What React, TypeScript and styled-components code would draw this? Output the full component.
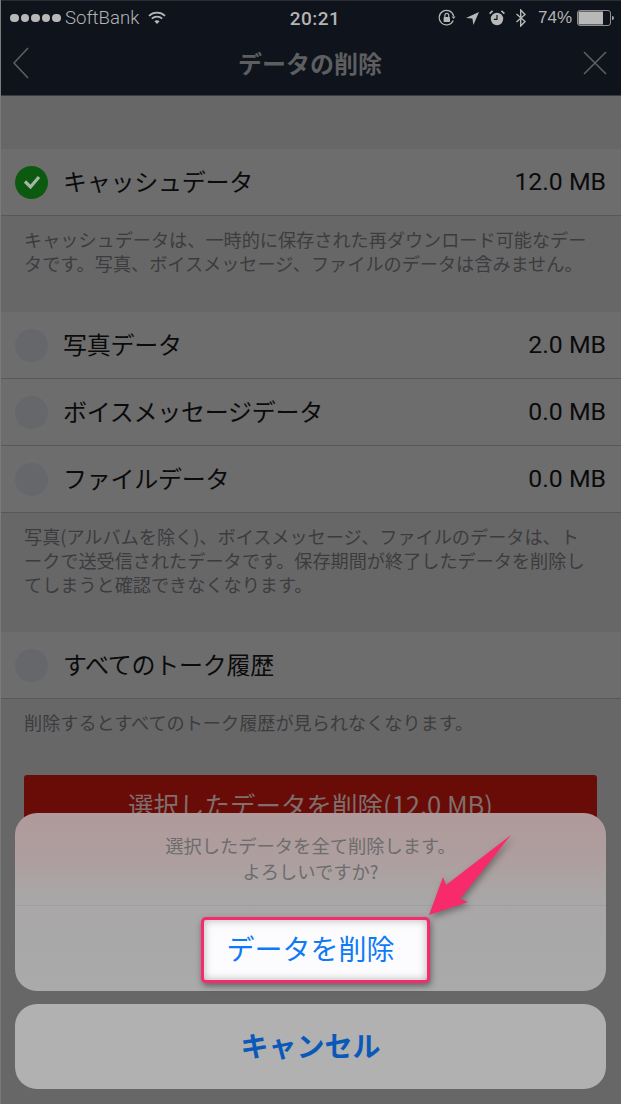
import React from "react";
import styled, { createGlobalStyle } from "styled-components";

const Global = createGlobalStyle`
  html, body { margin: 0; padding: 0; background: #676768; }
  body { font-family: "Noto Sans CJK JP", "Liberation Sans", sans-serif; }
  * { box-sizing: border-box; }
`;

const Screen = styled.div`
  position: relative;
  width: 621px;
  height: 1104px;
  overflow: hidden;
  background: #676768;
  border-left: 1px solid #7a7a7c;
`;

const Header = styled.header`
  height: 96px;
  background: #0f131b;
  border-top: 1px solid #2a2d33;
  border-bottom: 1px solid #3a3c40;
  display: flex;
  flex-direction: column;
`;

const StatusBar = styled.div`
  height: 30px;
  display: grid;
  grid-template-columns: 1fr auto 1fr;
  align-items: center;
  color: #b4b4b4;
  font-family: "Liberation Sans", sans-serif;
  font-size: 17px;
  padding: 0 7px 0 9px;
  margin-top: 2px;
`;

const StatusLeft = styled.div`
  display: flex;
  align-items: center;
  gap: 4px;
`;

const StatusRight = styled.div`
  display: flex;
  align-items: center;
  justify-content: flex-end;
  gap: 10px;
`;

const Dots = styled.div`
  display: flex;
  gap: 2px;
`;

const Dot = styled.span`
  width: 8.6px;
  height: 8.6px;
  border-radius: 50%;
  background: #b8b8b8;
`;

const Time = styled.div`
  font-size: 19px;
  font-weight: 500;
  font-family: "Roboto", sans-serif;
  letter-spacing: 0.5px;
  margin-left: 6px;
`;

const Percent = styled.span`
  font-size: 17px;
  margin-left: 1px;
  margin-right: -5px;
`;

const Carrier = styled.span`
  font-family: "Roboto", sans-serif;
  font-weight: 300;
  font-size: 18.6px;
  margin-right: 5px;
`;

const NavBar = styled.div`
  flex: 1;
  display: grid;
  grid-template-columns: 1fr auto 1fr;
  align-items: center;
  padding: 0 14px 2px 12px;
`;

const NavTitle = styled.h1`
  margin: 0;
  color: #5d5e60;
  font-size: 24px;
  font-weight: 700;
  line-height: 1;
`;

const NavIcon = styled.svg<{ $end?: boolean }>`
  display: block;
  fill: none;
  stroke: #5e5f60;
  stroke-width: 1.6;
  justify-self: ${(p) => (p.$end ? "end" : "start")};
`;

const Content = styled.main`
  padding-top: 53px;
`;

const Row = styled.div`
  height: 67px;
  padding: 0 15px 0 14px;
  display: flex;
  align-items: center;
  gap: 15px;
  background: #6d6d6e;
  border-bottom: 1px solid #58585a;
  color: #0b0b0b;
  font-size: 24px;
`;

const Radio = styled.span<{ $checked?: boolean }>`
  width: 33px;
  height: 33px;
  border-radius: 50%;
  flex: none;
  display: flex;
  align-items: center;
  justify-content: center;
  background: ${(p) => (p.$checked ? "#0c5a10" : "#65676b")};
`;

const Label = styled.span`
  flex: 1;
  line-height: 1;
  letter-spacing: -0.25px;
  padding-bottom: 2px;
`;

const Size = styled.span`
  font-family: "Roboto", "Liberation Sans", sans-serif;
  font-size: 24.8px;
  line-height: 1;
`;

const Note = styled.p<{ $h: number }>`
  margin: 0;
  height: ${(p) => p.$h}px;
  padding: 11px 14px 0 23px;
  color: #3c3c3e;
  font-size: 18.15px;
  line-height: 24px;
  white-space: pre-line;
`;

const DeleteButton = styled.div`
  margin: 0 24px 0 23px;
  height: 60px;
  padding-top: 12px;
  background: #690c08;
  border-radius: 3px;
  color: #7f6f6d;
  font-size: 25.5px;
  line-height: 34px;
  text-align: center;
`;

const Sheet = styled.div`
  position: absolute;
  left: 14px;
  top: 813px;
  width: 591px;
`;

const SheetPanel = styled.div`
  height: 178px;
  border-radius: 22px;
  overflow: hidden;
  background: linear-gradient(180deg, #b09a9b 0%, #ae9e9f 25%, #a9a7a7 50%, #aaaaaa 100%);
`;

const SheetMessage = styled.div`
  height: 93px;
  padding-top: 19px;
  border-bottom: 1px solid #9f9f9f;
  color: #6c6c6c;
  font-size: 18.3px;
  line-height: 26px;
  text-align: center;
`;

const CancelButton = styled.div`
  margin-top: 13px;
  height: 85px;
  border-radius: 22px;
  background: #b1b1b1;
  color: #0a58b8;
  font-size: 28px;
  font-weight: 700;
  line-height: 83px;
  text-align: center;
`;

const Highlight = styled.div`
  position: absolute;
  left: 200px;
  top: 917px;
  width: 229px;
  height: 66px;
  padding-right: 10px;
  background: #fcfcfe;
  border: 3px solid #f72b6b;
  border-radius: 5px;
  box-shadow: 1px 3px 6px rgba(40, 40, 40, 0.55), inset 0 0 8px rgba(120, 120, 120, 0.55);
  color: #0f7af5;
  font-size: 28px;
  line-height: 56px;
  text-align: center;
`;

const Arrow = styled.svg`
  position: absolute;
  left: 419px;
  top: 830px;
  overflow: visible;
  filter: drop-shadow(2px 3px 3px rgba(40, 40, 40, 0.45));
`;

const Check = () => (
  <svg width="20" height="16" viewBox="0 0 20 16" fill="none">
    <path d="M3 7.5 L8.5 13 L17 3" stroke="#a9b5a8" strokeWidth="3.2" />
  </svg>
);

const Wifi = () => (
  <svg width="18" height="14" viewBox="0 0 18 14" fill="none" stroke="#b8b8b8" strokeWidth="1.8">
    <path d="M1 4.8 C5.5 0.6 12.5 0.6 17 4.8" />
    <path d="M3.8 7.6 C6.8 5 11.2 5 14.2 7.6" />
    <path d="M9 13 L6.4 10.2 C8 9 10 9 11.6 10.2 Z" fill="#b8b8b8" stroke="none" />
  </svg>
);

const RotationLock = () => (
  <svg width="18" height="18" viewBox="0 0 18 18" fill="none" stroke="#b8b8b8" strokeWidth="1.2">
    <path d="M15.2 11.5 A7.3 7.3 0 1 1 15.6 7" />
    <path d="M13.6 7.6 L17.6 7.6 L15.6 10 Z" fill="#b8b8b8" stroke="none" />
    <rect x="5.6" y="8" width="6.4" height="5" rx="0.8" fill="#b8b8b8" stroke="none" />
    <path d="M6.9 8 V6.2 a1.9 1.9 0 0 1 3.8 0 V8" />
  </svg>
);

const Location = () => (
  <svg width="13" height="13" viewBox="0 0 13 13">
    <path d="M13 0 L0 6 L6.4 6.6 L7.4 13 Z" fill="#b8b8b8" />
  </svg>
);

const Alarm = () => (
  <svg width="16" height="16" viewBox="0 0 16 16">
    <circle cx="8" cy="9" r="6.2" fill="#b8b8b8" />
    <path d="M8 5 V9.4 H4.8" fill="none" stroke="#0f131b" strokeWidth="1.2" />
    <path d="M0.6 3.6 L3.6 0.8 M15.4 3.6 L12.4 0.8" stroke="#b8b8b8" strokeWidth="1.6" />
  </svg>
);

const Bluetooth = () => (
  <svg width="12" height="18" viewBox="0 0 11 18" fill="none" stroke="#b8b8b8" strokeWidth="1.4">
    <path d="M1 5 L9.5 12.6 L5.2 17 V1 L9.5 5.4 L1 13" />
  </svg>
);

const Battery = () => (
  <svg width="37" height="16" viewBox="0 0 37 16">
    <rect x="0.5" y="0.5" width="33" height="15" rx="2.5" fill="none" stroke="#8f8f8f" />
    <rect x="1.5" y="1.5" width="24.5" height="13" fill="#b8b8b8" />
    <path d="M35 6 a2 2 0 0 1 0 4 Z" fill="#a8a8a8" />
  </svg>
);

const sections = {
  cache: "キャッシュデータは、一時的に保存された再ダウンロード可能なデー\nタです。写真、ボイスメッセージ、ファイルのデータは含みません。",
  files: "写真(アルバムを除く)、ボイスメッセージ、ファイルのデータは、ト\nークで送受信されたデータです。保存期間が終了したデータを削除し\nてしまうと確認できなくなります。",
  talk: "削除するとすべてのトーク履歴が見られなくなります。",
};

export default function App() {
  return (
    <Screen>
      <Global />
      <Header>
        <StatusBar>
          <StatusLeft>
            <Dots>
              {[0, 1, 2, 3, 4].map((i) => (
                <Dot key={i} />
              ))}
            </Dots>
            <Carrier>SoftBank</Carrier>
            <Wifi />
          </StatusLeft>
          <Time>20:21</Time>
          <StatusRight>
            <RotationLock />
            <Location />
            <Alarm />
            <Bluetooth />
            <Percent>74%</Percent>
            <Battery />
          </StatusRight>
        </StatusBar>
        <NavBar>
          <NavIcon width="16" height="32" viewBox="0 0 16 32">
            <path d="M15 1 L1 16 L15 31" />
          </NavIcon>
          <NavTitle>データの削除</NavTitle>
          <NavIcon $end width="24" height="24" viewBox="0 0 24 24">
            <path d="M1 1 L23 23 M23 1 L1 23" />
          </NavIcon>
        </NavBar>
      </Header>
      <Content>
        <Row>
          <Radio $checked>
            <Check />
          </Radio>
          <Label>キャッシュデータ</Label>
          <Size>12.0 MB</Size>
        </Row>
        <Note $h={96}>{sections.cache}</Note>
        <Row>
          <Radio />
          <Label>写真データ</Label>
          <Size>2.0 MB</Size>
        </Row>
        <Row>
          <Radio />
          <Label>ボイスメッセージデータ</Label>
          <Size>0.0 MB</Size>
        </Row>
        <Row>
          <Radio />
          <Label>ファイルデータ</Label>
          <Size>0.0 MB</Size>
        </Row>
        <Note $h={119}>{sections.files}</Note>
        <Row>
          <Radio />
          <Label>すべてのトーク履歴</Label>
        </Row>
        <Note $h={76}>{sections.talk}</Note>
        <DeleteButton>選択したデータを削除(12.0 MB)</DeleteButton>
      </Content>
      <Sheet>
        <SheetPanel>
          <SheetMessage>
            選択したデータを全て削除します。
            <br />
            よろしいですか?
          </SheetMessage>
        </SheetPanel>
        <CancelButton>キャンセル</CancelButton>
      </Sheet>
      <Highlight>データを削除</Highlight>
      <Arrow width="92" height="90" viewBox="0 0 92 90">
        <path d="M91 5 L40 69 L48 72 L9 85 L23 47 L26 55 Z" fill="#f72b6b" />
      </Arrow>
    </Screen>
  );
}
